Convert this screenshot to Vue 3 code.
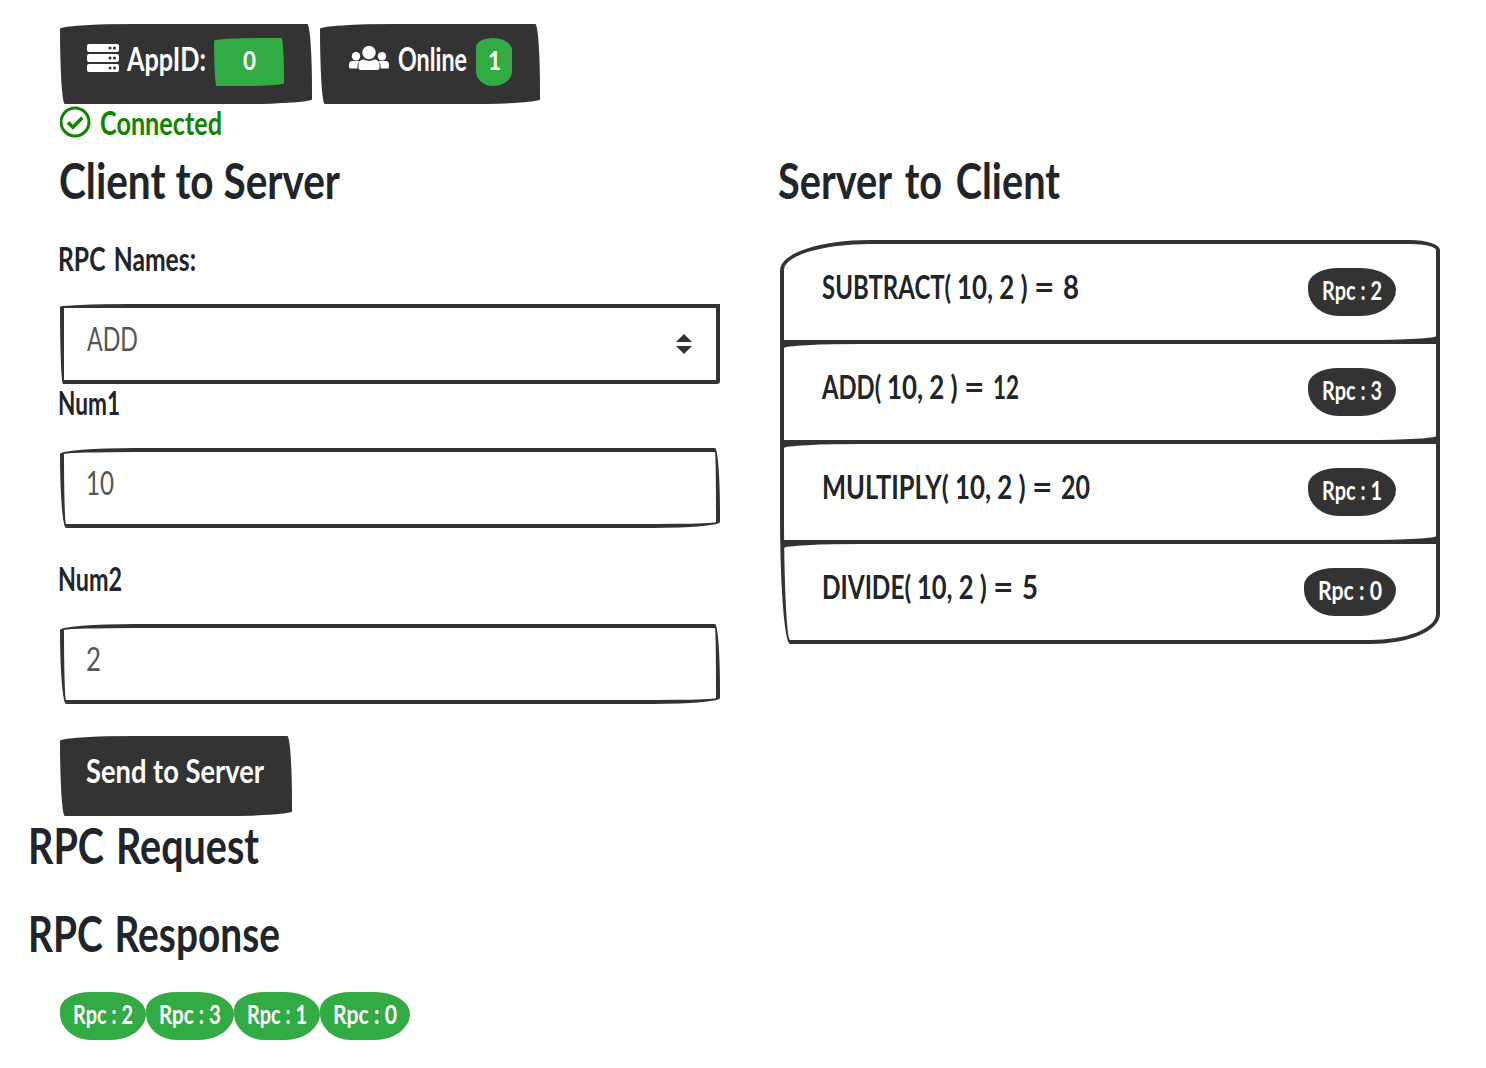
<script setup>
import { ref } from 'vue'

// Condenses a label horizontally so that it takes the given width.
const vFit = {
  mounted(el, { value }) {
    const natural = el.getBoundingClientRect().width
    el.style.transform = `scaleX(${value / natural})`
    el.style.marginRight = `${value - natural}px`
  }
}

const fields = ref([
  { label: 'Num1', labelWidth: 62, value: '10', width: 28 },
  { label: 'Num2', labelWidth: 64, value: '2', width: 15 }
])

const results = ref([
  { parts: [['SUBTRACT( ', 135], ['10, 2 ) ', 77], ['= ', 29], ['8', 16]], id: 2, badge: 88 },
  { parts: [['ADD( ', 65], ['10, 2 ) ', 77], ['= ', 29], ['12', 26]], id: 3, badge: 88 },
  { parts: [['MULTIPLY( ', 133], ['10, 2 ) ', 77], ['= ', 29], ['20', 29]], id: 1, badge: 88 },
  { parts: [['DIVIDE( ', 95], ['10, 2 ) ', 76], ['= ', 29], ['5', 16]], id: 0, badge: 92 }
])

const responses = ref([
  { id: 2, width: 86 },
  { id: 3, width: 88 },
  { id: 1, width: 86 },
  { id: 0, width: 90 }
])
</script>

<template>
  <main class="page">
    <header class="top">
      <div class="btn app">
        <svg class="server" width="32" height="28" viewBox="0 0 32 28">
          <g fill="#fff">
            <rect width="32" height="8" rx="2" />
            <rect y="10" width="32" height="8" rx="2" />
            <rect y="20" width="32" height="8" rx="2" />
          </g>
          <g fill="#333">
            <circle cx="23" cy="4" r="1.5" /><circle cx="27.5" cy="4" r="1.5" />
            <circle cx="23" cy="14" r="1.5" /><circle cx="27.5" cy="14" r="1.5" />
            <circle cx="23" cy="24" r="1.5" /><circle cx="27.5" cy="24" r="1.5" />
          </g>
        </svg>
        <span class="btn-text"><span v-fit="79" class="fit">AppID:</span></span>
        <span class="badge square"><span v-fit="13" class="fit">0</span></span>
      </div>
      <div class="btn online">
        <svg class="users" width="40" height="24" viewBox="0 0 40 24" fill="#fff">
          <circle cx="20" cy="6.5" r="6.7" />
          <circle cx="7" cy="10.3" r="4.2" />
          <circle cx="33" cy="10.3" r="4.2" />
          <path d="M14.5 13.6Q20 16.5 25.500 13.600C29 14 30.500 16 30.500 19V21.500Q30.500 24 28 24H12Q9.500 24 9.500 21.500V19C9.500 16 11 14 14.500 13.600Z" />
          <path d="M3.500 15H9.500L10.500 15.600C9 17 8.500 18.500 8.500 20V22.500H1.500Q0 22.500 0 21V18.500Q0 15 3.500 15Z" />
          <path d="M36.500 15H30.500L29.500 15.600C31 17 31.500 18.500 31.500 20V22.500H38.500Q40 22.500 40 21V18.500Q40 15 36.500 15Z" />
        </svg>
        <span class="btn-text"><span v-fit="69" class="fit">Online</span></span>
        <span class="badge pill"><span v-fit="13" class="fit">1</span></span>
      </div>
    </header>

    <div class="status">
      <svg width="32" height="32" viewBox="0 0 32 32" fill="none" stroke="#118400">
        <circle cx="15" cy="16" r="14" stroke-width="3" />
        <path d="M8 16.500L13 21.300L22.300 11.800" stroke-width="3.600" />
      </svg>
      <span v-fit="122" class="fit">Connected</span>
    </div>

    <div class="columns">
      <section class="column">
        <h2 class="client"><span v-fit="281" class="fit">Client to Server</span></h2>
        <div class="label first"><span v-fit="138" class="fit">RPC Names:</span></div>
        <div class="control select">
          <span v-fit="51" class="fit">ADD</span>
          <svg width="16" height="20" viewBox="0 0 16 20" fill="#333">
            <path d="M0 8L8 0L16 8ZM0 12H16L8 20Z" />
          </svg>
        </div>
        <div v-for="f in fields" :key="f.label" class="group">
          <div class="label"><span v-fit="f.labelWidth" class="fit">{{ f.label }}</span></div>
          <div class="control"><span v-fit="f.width" class="fit">{{ f.value }}</span></div>
        </div>
        <div class="btn send">
          <span class="btn-text"><span v-fit="178" class="fit">Send to Server</span></span>
        </div>
      </section>

      <section class="column">
        <h2><span v-fit="282" class="fit">Server to Client</span></h2>
        <ul class="list">
          <li v-for="r in results" :key="r.id">
            <span class="call"><span v-for="[text, width] in r.parts" :key="text" v-fit="width" class="fit">{{ text }}</span></span>
            <span class="badge pill dark" :style="{ width: r.badge + 'px' }">
              <span v-fit="r.badge - 28" class="fit">Rpc : {{ r.id }}</span>
            </span>
          </li>
        </ul>
      </section>
    </div>

    <h2 class="outer"><span v-fit="231" class="fit">RPC Request</span></h2>
    <h2 class="outer response"><span v-fit="252" class="fit">RPC Response</span></h2>
    <div class="responses">
      <span v-for="r in responses" :key="r.id" class="badge pill" :style="{ width: r.width + 'px' }">
        <span v-fit="r.width - 26" class="fit">Rpc : {{ r.id }}</span>
      </span>
    </div>
  </main>
</template>

<style>
body {
  margin: 0;
  background: #fff;
}
</style>

<style scoped>
.page {
  box-sizing: border-box;
  width: 1486px;
  height: 1068px;
  padding: 24px 46px 0 60px;
  overflow: hidden;
  color: #212529;
  font: 700 33px/36px Lato, "Open Sans", sans-serif;
}
.fit {
  display: inline-block;
  white-space: pre;
  transform-origin: 0 50%;
}
.top {
  display: flex;
  gap: 8px;
}
.btn {
  box-sizing: border-box;
  display: flex;
  align-items: flex-start;
  height: 80px;
  padding: 14px 28px 0 27px;
  background: #333;
  color: #fff;
  border-radius: 510px 32px 450px 32px / 32px 450px 32px 510px;
}
.app {
  width: 252px;
}
.online {
  width: 220px;
  padding-left: 29px;
}
.btn-text {
  margin-top: 2px;
}
.server {
  margin: 6px 8px 0 0;
}
.users {
  margin: 8px 9px 0 0;
}
.badge {
  box-sizing: border-box;
  display: flex;
  justify-content: center;
  height: 48px;
  background: #33ab45;
  color: #fff;
  font-size: 26px;
  line-height: 44px;
  flex: none;
}
.square {
  width: 70px;
  margin-left: 8px;
  border-radius: 510px 30px 450px 30px / 30px 450px 30px 510px;
}
.pill {
  border-radius: 224px 256px 256px 224px / 128px 160px 192px 192px;
}
.online .pill {
  width: 36px;
  margin-left: 9px;
}
.dark {
  background: #333;
}
.status {
  display: flex;
  height: 46px;
  color: #118400;
}
.status svg {
  margin: 2px 8px 0 0;
}
.columns {
  display: flex;
  gap: 60px;
}
.column {
  width: 660px;
  flex: none;
}
h2 {
  height: 58px;
  margin: 0 0 0 -2px;
  font-size: 50px;
  line-height: 58px;
  word-spacing: 5px;
}
.column h2 {
  line-height: 60px;
}
.column .client {
  margin-left: -1px;
  word-spacing: 0;
}
.label {
  height: 36px;
  margin: 0 0 28px -2px;
}
.label.first {
  margin-top: 33px;
  margin-bottom: 27px;
  line-height: 34px;
  word-spacing: 3px;
}
.control {
  box-sizing: border-box;
  display: flex;
  align-items: flex-start;
  justify-content: space-between;
  height: 80px;
  padding: 12px 24px 0 22px;
  border: 4px solid #333;
  border-radius: 75px 5px 66px 6px / 6px 66px 6px 74px;
  color: #555;
  font-weight: 400;
}
.select {
  padding-left: 23px;
  border-radius: 70px 0 3px 3px / 3px 0 3px 76px;
}
.select svg {
  margin-top: 14px;
}
.group {
  margin-bottom: 32px;
}
.send {
  width: 232px;
  padding-left: 26px;
}
.call {
  display: flex;
}
.list {
  box-sizing: border-box;
  display: flex;
  flex-direction: column;
  gap: 4px;
  height: 404px;
  margin: 32px 0 0;
  padding: 0;
  border: 4px solid #333;
  border-radius: 90px 30px 70px 10px / 30px 10px 30px 130px;
  background: #333;
  overflow: hidden;
  list-style: none;
}
.list li {
  box-sizing: border-box;
  display: flex;
  align-items: flex-start;
  justify-content: space-between;
  height: 96px;
  padding: 24px 40px 0 38px;
  background: #fff;
  border-radius: 80px 0 70px 0 / 4px 0 4px 0;
}
.list li:first-child {
  border-top-left-radius: 0;
}
.list li:last-child {
  border-bottom-right-radius: 0;
}
.outer {
  margin-left: -32px;
  word-spacing: 3px;
}
.response {
  margin-top: 30px;
}
.responses {
  display: flex;
  margin-top: 30px;
}
</style>
